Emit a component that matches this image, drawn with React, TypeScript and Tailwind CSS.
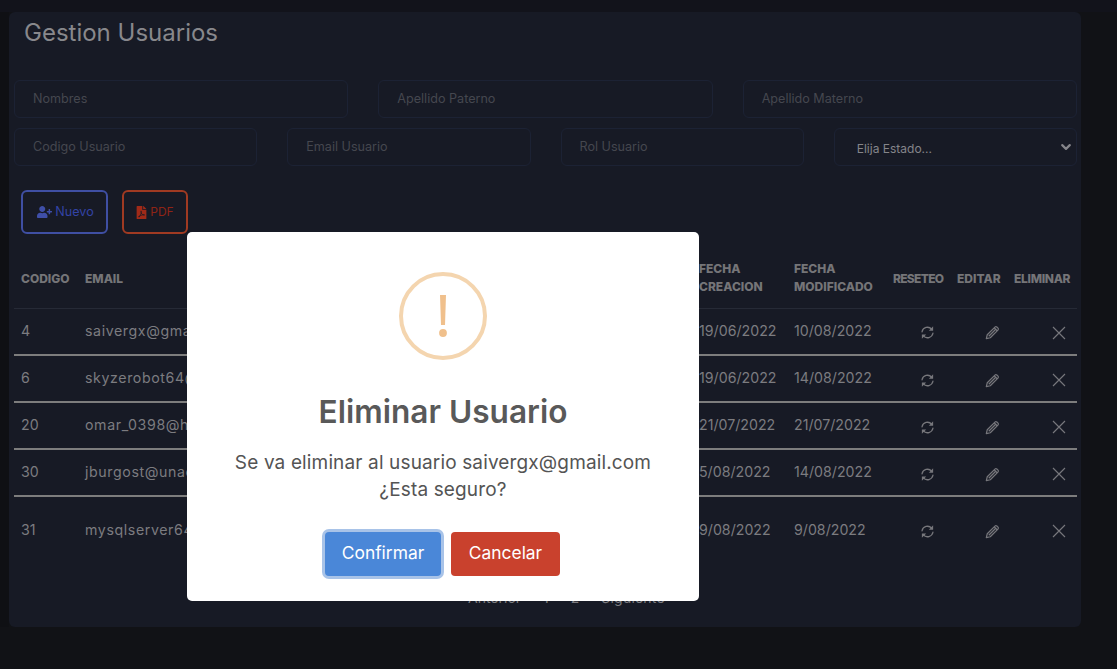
import { FaUserPlus, FaFilePdf } from "react-icons/fa";

const rows = [
  ["4", "saivergx@gmail.com", "19/06/2022", "10/08/2022"],
  ["6", "skyzerobot64@gmail.com", "19/06/2022", "14/08/2022"],
  ["20", "omar_0398@hotmail.com", "21/07/2022", "21/07/2022"],
  ["30", "jburgost@unac.edu.pe", "5/08/2022", "14/08/2022"],
  ["31", "mysqlserver64@gmail.com", "9/08/2022", "9/08/2022"],
];

const field = "h-[38px] rounded-md border border-[#1c2234] px-[18px] flex items-center text-[12.6px] text-[#45474f]";
const th = "px-[7px] text-left align-middle text-[12px] font-extrabold leading-[18px] text-[#757578] border-b border-[#262a36]";

function Reload() {
  return (
    <svg width="15" height="15" viewBox="0 0 16 16" fill="none" stroke="#77777c" strokeWidth="1.4" strokeLinecap="round">
      <path d="M2.2 7.2A5.9 5.9 0 0 1 12.4 4.4" />
      <path d="M14 1.4V6H9.4Z" fill="#77777c" stroke="none" />
      <path d="M13.8 8.8A5.9 5.9 0 0 1 3.6 11.6" />
      <path d="M2 14.6V10H6.6Z" fill="#77777c" stroke="none" />
    </svg>
  );
}

function Pencil() {
  return (
    <svg width="15" height="15" viewBox="0 0 16 16" fill="none" stroke="#77777c" strokeWidth="1.3" strokeLinejoin="round">
      <path d="M1.4 14.6L2.4 10.4L10.6 2.2Q11.6 1.2 12.6 2.1L13.9 3.4Q14.8 4.4 13.8 5.4L5.6 13.6Z" />
      <path d="M4 12L12 4" />
      <path d="M9.8 3L13 6.2" />
    </svg>
  );
}

function Cross() {
  return (
    <svg width="14" height="14" viewBox="0 0 14 14" fill="none" stroke="#77777c" strokeWidth="1.15">
      <path d="M1 1L13 13M13 1L1 13" />
    </svg>
  );
}

export default function App() {
  return (
    <div className="relative h-[669px] w-[1117px] overflow-hidden bg-[#111216] font-['Inter',sans-serif]">
      <div className="h-[12px] bg-[#12131b]" />
      <div className="flex">
        <div className="w-[9px] bg-[#0f1014]" />
        <main className="h-[615px] w-[1072px] rounded-md bg-[#171a25] px-[5px]">
          <h1 className="h-[68px] pl-[10px] pt-[4px] text-[24px] font-normal leading-[34px] text-[#88888c]">Gestion Usuarios</h1>
          <div className="w-[1063px]">
            <div className="grid grid-cols-3 gap-[30px]">
              <div className={field}>Nombres</div>
              <div className={field}>Apellido Paterno</div>
              <div className={field}>Apellido Materno</div>
            </div>
            <div className="mt-[10px] grid grid-cols-4 gap-[30px]">
              <div className={field}>Codigo Usuario</div>
              <div className={field}>Email Usuario</div>
              <div className={field}>Rol Usuario</div>
              <div className="flex h-[38px] items-center justify-between rounded-md border border-[#1c2234] pl-[22px] pr-[5px] text-[12px] text-[#85858a]">
                <span className="pt-[3px]">Elija Estado...</span>
                <svg width="10" height="10" viewBox="0 0 16 16" fill="none" stroke="#85858a" strokeWidth="3.4" strokeLinecap="round" strokeLinejoin="round"><path d="M2 5l6 6 6-6" /></svg>
              </div>
            </div>
            <div className="mt-[24px] flex gap-[14px] pl-[7px]">
              <button className="flex h-[44px] w-[87px] items-center justify-center gap-[3px] rounded-md border-2 border-[#3f4fa3] pl-[2px] text-[12.6px] text-[#3343a6]">
                <FaUserPlus className="h-[14px] w-[15px] text-[#3f4fa8]" />Nuevo
              </button>
              <button className="flex h-[44px] w-[66px] items-center justify-center gap-[3px] rounded-md border-2 border-[#a03a22] text-[12px] text-[#8f2416]">
                <FaFilePdf className="h-[13px] w-[11px] text-[#a02a18]" />PDF
              </button>
            </div>
            <table className="mt-[16px] w-[1063px] table-fixed border-collapse">
              <colgroup>
                <col className="w-[64px]" />
                <col className="w-[614px]" />
                <col className="w-[95px]" />
                <col className="w-[99px]" />
                <col className="w-[64px]" />
                <col className="w-[57px]" />
                <col className="w-[70px]" />
              </colgroup>
              <thead>
                <tr className="h-[58px]">
                  <th className={th}>CODIGO</th>
                  <th className={th}>EMAIL</th>
                  <th className={`${th} pb-[2px]`}>FECHA CREACION</th>
                  <th className={`${th} pb-[2px]`}>FECHA MODIFICADO</th>
                  <th className={`${th} tracking-[-0.7px]`}>RESETEO</th>
                  <th className={th}>EDITAR</th>
                  <th className={`${th} tracking-[-0.3px]`}>ELIMINAR</th>
                </tr>
              </thead>
              <tbody className="text-[14.2px] text-[#7c7c80]">
                {rows.map((r, i) => {
                  const pad = i === 4 ? "" : "pb-[1px]";
                  const icon = i === 4 ? "pt-[2px]" : "pt-[3px]";
                  return (
                    <tr key={r[0]} className={i === 4 ? "h-[67px]" : "h-[47px] border-b-2 border-[#7d7d7d]"}>
                      <td className={`px-[7px] ${pad}`}>{r[0]}</td>
                      <td className={`px-[7px] tracking-[0.6px] ${pad}`}>{r[1]}</td>
                      <td className={`px-[7px] ${pad}`}>{r[2]}</td>
                      <td className={`px-[7px] ${pad}`}>{r[3]}</td>
                      <td className={`pl-[34px] ${icon}`}><Reload /></td>
                      <td className={`pl-[35px] ${icon}`}><Pencil /></td>
                      <td className={`pl-[45px] ${icon}`}><Cross /></td>
                    </tr>
                  );
                })}
              </tbody>
            </table>
            <div className="mt-[27px] flex gap-[22px] pl-[454px] text-[14px] leading-[16px] text-[#7c7c80]">
              <span>Anterior</span><span>1</span><span>2</span><span className="tracking-[0.2px]">Siguiente</span>
            </div>
          </div>
        </main>
      </div>

      <div className="absolute left-[187px] top-[232px] flex h-[369px] w-[512px] flex-col items-center rounded-[5px] bg-white pt-[40px]">
        <div className="flex h-[88px] w-[88px] items-center justify-center rounded-full border-[4px] border-[#f4d5af]">
          <svg width="10" height="44" viewBox="0 0 10 44"><path d="M2 1H8L7 31H3Z" fill="#f0c08c" /><circle cx="5" cy="39" r="3.9" fill="#f0c08c" /></svg>
        </div>
        <h2 className="mt-[30px] text-[31.6px] font-semibold leading-[44px] text-[#595959]">Eliminar Usuario</h2>
        <p className="mt-[15px] text-center text-[19px] leading-[27px] tracking-[0.14px] text-[#545454]">
          Se va eliminar al usuario saivergx@gmail.com<br />¿Esta seguro?
        </p>
        <div className="mr-[1px] mt-[29px] flex items-center gap-[10px]">
          <button className="h-[44px] w-[116px] rounded-[4px] bg-[#4a87d8] pb-[1px] text-[17.4px] text-white ring-[3px] ring-[#a8c3e8]">Confirmar</button>
          <button className="h-[44px] w-[109px] rounded-[4px] bg-[#c9412d] pb-[1px] text-[17.4px] text-white">Cancelar</button>
        </div>
      </div>
    </div>
  );
}
